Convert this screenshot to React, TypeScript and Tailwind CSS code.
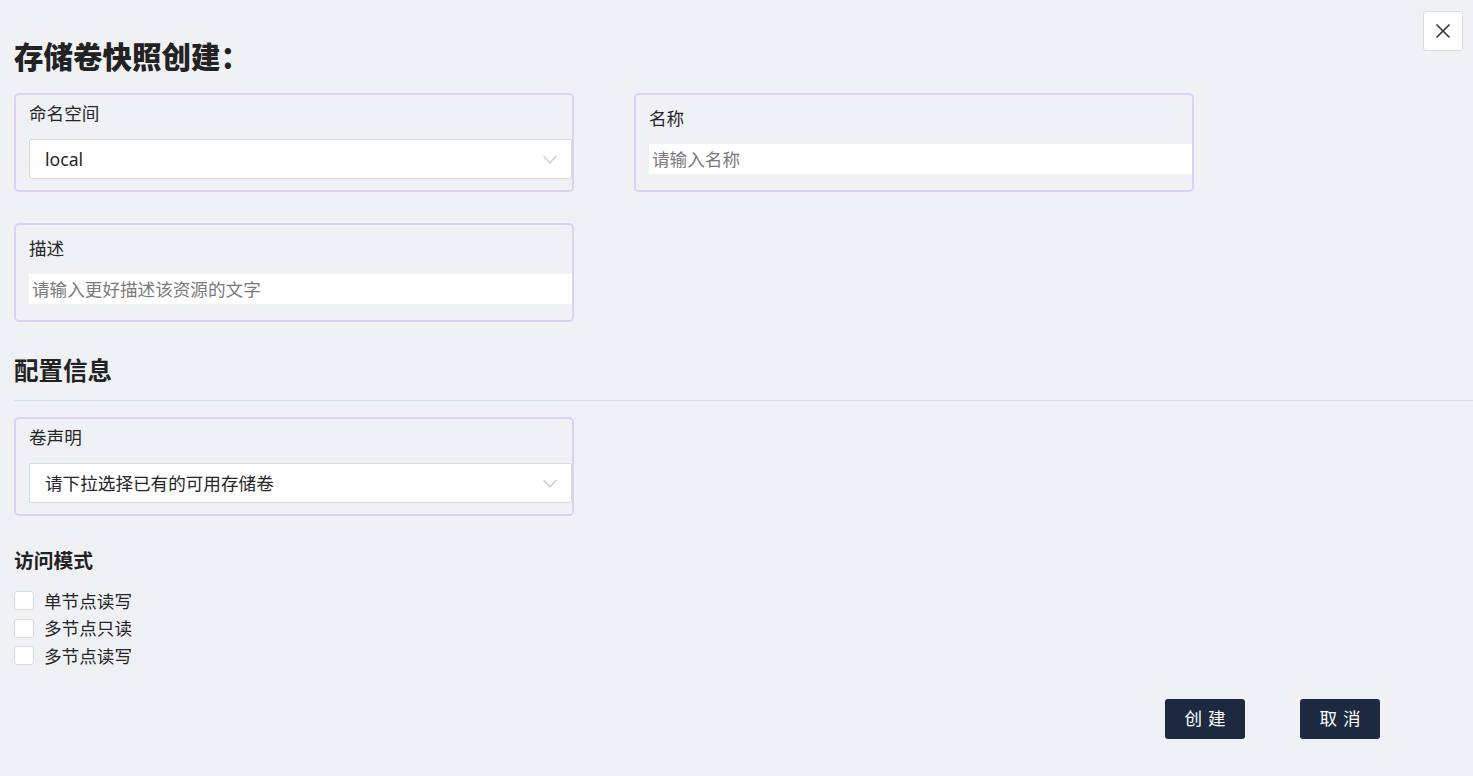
import React from 'react';

const font = { fontFamily: '"Noto Sans", "Noto Sans CJK SC", sans-serif' };

const Chevron = () => (
  <svg width="14" height="9" viewBox="0 0 14 9" fill="none" className="shrink-0">
    <polyline points="0.5,0.8 7,7.8 13.5,0.8" stroke="#c4c4c4" strokeWidth="1.2" />
  </svg>
);

const FieldCard = ({ label, children }: { label: string; children: React.ReactNode }) => (
  <div className="w-[560px] h-[99px] border-2 border-[#dcd0f7] rounded-[5px] flex flex-col justify-center pl-[13px]">
    <div className="text-[17.6px] leading-[15px] text-[#262626] mb-[18px]">{label}</div>
    {children}
  </div>
);

const SelectBox = ({ value }: { value: string }) => (
  <div className="h-[40px] bg-white border border-[#d9d9d9] rounded-[2px] flex items-center justify-between pl-[15px] pr-[14px]">
    <span className="text-[17.6px] text-[#262626]">{value}</span>
    <Chevron />
  </div>
);

const TextInput = ({ placeholder }: { placeholder: string }) => (
  <input
    placeholder={placeholder}
    className="h-[30px] w-full bg-white pl-[3px] text-[17.6px] text-[#262626] placeholder:text-[#7a7a7a] outline-none"
    style={font}
  />
);

const Check = ({ label }: { label: string }) => (
  <label className="h-[27.5px] flex items-center gap-[10px]">
    <span className="w-[20px] h-[19px] bg-white border border-[#dcdcdc] rounded-[3px]" />
    <span className="text-[17.6px] text-[#262626]">{label}</span>
  </label>
);

export default function App() {
  return (
    <div className="relative min-h-screen bg-[#f0f1f5] pl-[14px] pt-[37px] pb-[37px]" style={font}>
      <button className="absolute top-[11px] right-[10px] w-[40px] h-[40px] bg-white border border-[#dcdcdc] rounded-[3px] flex items-center justify-center">
        <svg width="16" height="16" viewBox="0 0 16 16" fill="none">
          <path d="M1.5 1.5 L14.5 14.5 M14.5 1.5 L1.5 14.5" stroke="#333" strokeWidth="1.6" />
        </svg>
      </button>

      <h1 className="text-[29.5px] leading-[40px] font-black text-[#222]">存储卷快照创建：</h1>

      <div className="flex gap-[60px] mt-[16px]">
        <FieldCard label="命名空间">
          <SelectBox value="local" />
        </FieldCard>
        <FieldCard label="名称">
          <TextInput placeholder="请输入名称" />
        </FieldCard>
      </div>

      <div className="mt-[31px]">
        <FieldCard label="描述">
          <TextInput placeholder="请输入更好描述该资源的文字" />
        </FieldCard>
      </div>

      <h2 className="mt-[33px] text-[24.5px] leading-[32px] font-bold text-[#222]">配置信息</h2>
      <div className="mt-[13px] border-t border-[#dfe0e6]" />

      <div className="mt-[16px]">
        <FieldCard label="卷声明">
          <SelectBox value="请下拉选择已有的可用存储卷" />
        </FieldCard>
      </div>

      <h3 className="mt-[31px] text-[19.8px] leading-[28px] font-bold text-[#222]">访问模式</h3>
      <div className="mt-[12px] flex flex-col">
        <Check label="单节点读写" />
        <Check label="多节点只读" />
        <Check label="多节点读写" />
      </div>

      <div className="mt-[29px] flex justify-end gap-[55px] pr-[93px]">
        <button className="w-[80px] h-[40px] bg-[#1c2940] text-white text-[17.6px] rounded-[3px] tracking-[6px] pl-[6px]">创建</button>
        <button className="w-[80px] h-[40px] bg-[#1c2940] text-white text-[17.6px] rounded-[3px] tracking-[6px] pl-[6px]">取消</button>
      </div>
    </div>
  );
}
